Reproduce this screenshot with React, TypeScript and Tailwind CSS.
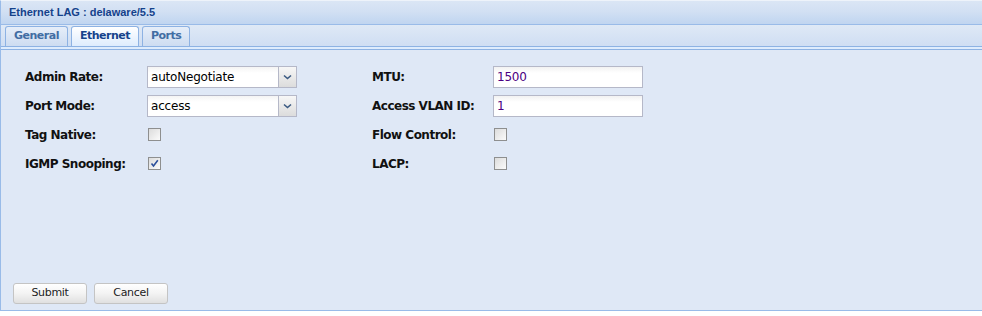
import React from "react";

const font = "font-['Tahoma','DejaVu_Sans','Liberation_Sans',sans-serif]";

function Chevron() {
  return (
    <svg width="9" height="6" viewBox="0 0 9 6" aria-hidden>
      <path d="M1 1.5 L4.5 4.5 L8 1.5" fill="none" stroke="#3b5a82" strokeWidth="1.6" />
    </svg>
  );
}

function Select({ value }: { value: string }) {
  return (
    <div className="flex h-[22px] w-[150px] border border-[#b5b8c8] bg-white">
      <span className="flex-1 bg-gradient-to-b from-[#f4f4f4] to-white to-[30%] px-[3px] pt-[2px] text-[12px] leading-[16px] tracking-[-0.2px] text-black">
        {value}
      </span>
      <span className="flex w-[18px] items-center justify-center border-l border-[#b5b8c8] bg-gradient-to-b from-[#f7f7f7] to-[#dcdcdc]">
        <Chevron />
      </span>
    </div>
  );
}

function TextField({ value }: { value: string }) {
  return (
    <div className="h-[22px] w-[150px] border border-[#b5b8c8] bg-gradient-to-b from-[#f2f2f2] to-white to-[30%] px-[3px] pt-[2px] text-[12px] leading-[16px] tracking-[-0.2px] text-[#4b0082]">
      {value}
    </div>
  );
}

function Checkbox({ checked }: { checked?: boolean }) {
  return (
    <span className="flex h-[13px] w-[13px] items-center justify-center border border-[#8e8f8f] bg-gradient-to-br from-[#dcdcdc] to-[#fbfbfb]">
      {checked && (
        <svg width="9" height="9" viewBox="0 0 9 9" aria-hidden>
          <path d="M1.5 4.5 L3.5 7 L7.8 1.3" fill="none" stroke="#2b4f9b" strokeWidth="1.6" />
        </svg>
      )}
    </span>
  );
}

function Row({ label, children, w }: { label: string; children: React.ReactNode; w: string }) {
  return (
    <div className="flex h-[29px] items-center">
      <span className={`${w} shrink-0 text-[12px] font-bold tracking-[-0.5px] text-[#111]`}>{label}</span>
      {children}
    </div>
  );
}

function Tab({ label, active }: { label: string; active?: boolean }) {
  return (
    <div
      className={`flex h-[20px] items-center rounded-t-[3px] border border-b-0 border-[#8db2e3] px-[8px] text-[11px] font-bold tracking-[-0.5px] ${
        active
          ? "bg-gradient-to-b from-white to-[#deecfd] text-[#15428b]"
          : "bg-gradient-to-b from-[#e6eef9] to-[#cddcf1] text-[#416da3]"
      }`}
    >
      {label}
    </div>
  );
}

export default function App() {
  return (
    <div className={`h-[316px] w-[982px] overflow-hidden bg-white ${font}`}>
      <div className="flex h-[311px] flex-col border-l border-t border-l-[#99bbe8] border-t-[#eef3fa]">
        <div className="h-[24px] border-b border-[#99bbe8] bg-gradient-to-b from-[#dbe6f5] via-[#d2e0f3] via-[45%] to-[#c0d5f0] px-[8px] pt-[5px] font-['Liberation_Sans',Arial,sans-serif] text-[11px] font-bold leading-[13px] text-[#15428b]">
          Ethernet LAG : delaware/5.5
        </div>
        <div className="flex h-[22px] items-end gap-[3px] border-b border-[#8db2e3] bg-gradient-to-b from-[#dfe9f6] to-[#cfdef3] pl-[4px]">
          <Tab label="General" />
          <Tab label="Ethernet" active />
          <Tab label="Ports" />
        </div>
        <div className="box-content h-[2px] border-b border-[#8db2e3] bg-[#deecfd]" />
        <div className="flex flex-1 flex-col border-b border-[#99bbe8] bg-[#dfe8f6]">
          <div className="flex pl-[24px] pt-[12px]">
            <div className="w-[347px]">
              <Row label="Admin Rate:" w="w-[122px]">
                <Select value="autoNegotiate" />
              </Row>
              <Row label="Port Mode:" w="w-[122px]">
                <Select value="access" />
              </Row>
              <Row label="Tag Native:" w="w-[123px]">
                <Checkbox />
              </Row>
              <Row label="IGMP Snooping:" w="w-[123px]">
                <Checkbox checked />
              </Row>
            </div>
            <div>
              <Row label="MTU:" w="w-[121px]">
                <TextField value="1500" />
              </Row>
              <Row label="Access VLAN ID:" w="w-[121px]">
                <TextField value="1" />
              </Row>
              <Row label="Flow Control:" w="w-[122px]">
                <Checkbox />
              </Row>
              <Row label="LACP:" w="w-[122px]">
                <Checkbox />
              </Row>
            </div>
          </div>
          <div className="mt-auto flex gap-[7px] pb-[6px] pl-[12px]">
            {["Submit", "Cancel"].map((b) => (
              <button
                key={b}
                className="h-[21px] w-[74px] rounded-[3px] border border-[#c4c4c4] bg-gradient-to-b from-white via-[#f3f3f3] to-[#e0e0e0] text-[11px] tracking-[-0.3px] text-[#222]"
              >
                {b}
              </button>
            ))}
          </div>
        </div>
      </div>
    </div>
  );
}
